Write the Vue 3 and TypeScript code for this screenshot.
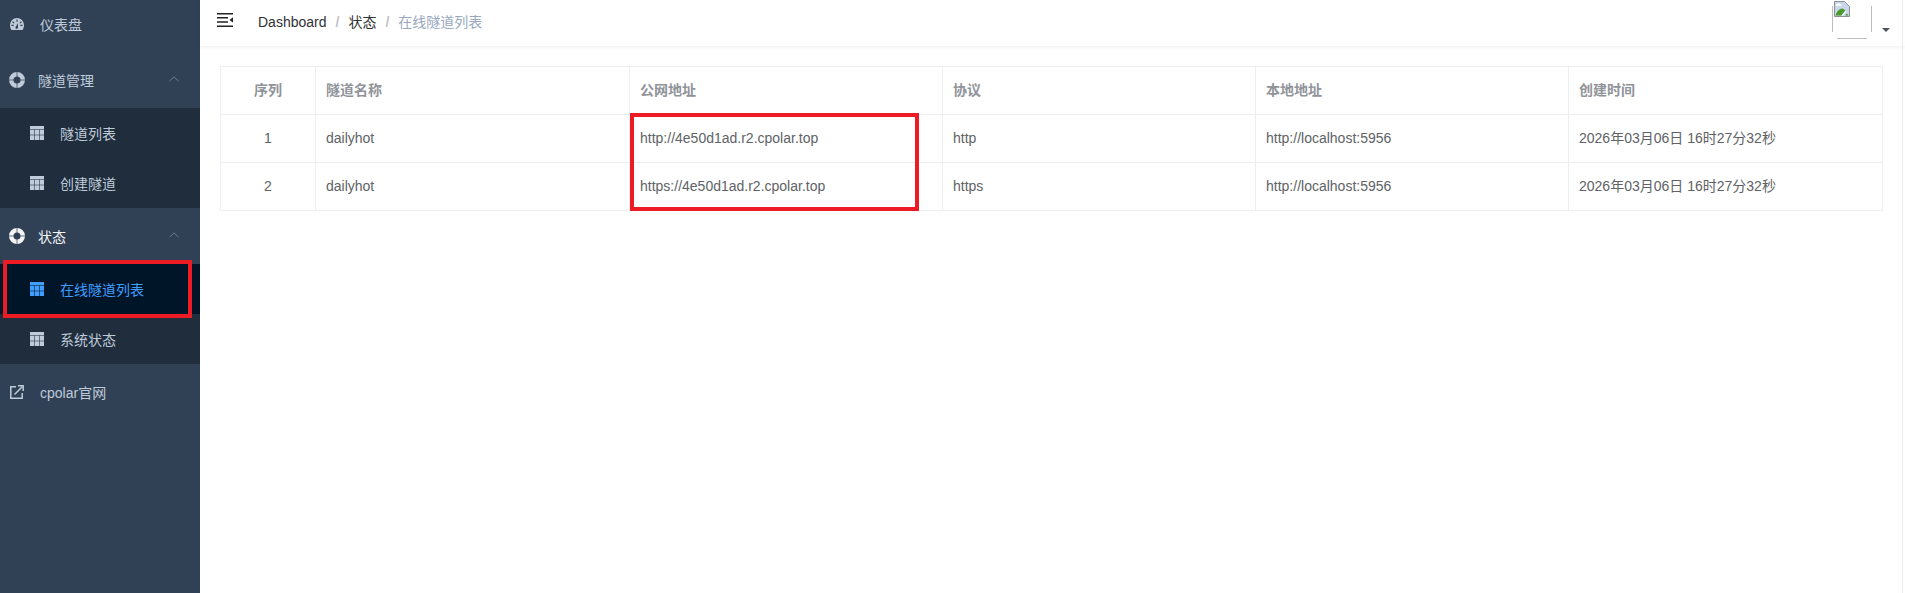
<script setup lang="ts">
interface Row { id: number; name: string; url: string; proto: string; local: string; time: string }
const rows: Row[] = [
  { id: 1, name: 'dailyhot', url: 'http://4e50d1ad.r2.cpolar.top', proto: 'http', local: 'http://localhost:5956', time: '2026年03月06日 16时27分32秒' },
  { id: 2, name: 'dailyhot', url: 'https://4e50d1ad.r2.cpolar.top', proto: 'https', local: 'http://localhost:5956', time: '2026年03月06日 16时27分32秒' },
]
const heads: string[] = ['序列', '隧道名称', '公网地址', '协议', '本地地址', '创建时间']
</script>

<template>
  <div class="app">
    <aside class="side">
      <a class="item top first">
        <svg class="ic-dash" viewBox="0 0 14 12" width="14" height="12"><path fill="#bfcbd9" fill-rule="evenodd" d="M7 0a7 7 0 0 1 7 7c0 2-.6 3.600-1.500 5H1.500C.6 10.600 0 9 0 7a7 7 0 0 1 7-7zM6.400 1.500v2.300h1.200V1.500zM3 3.200l-.9.8 1.600 1.600.9-.8zm8 0L9.400 4.800l.9.800L11.900 4zM1.500 6.700v1.200h2.200V6.700zm8.800 0v1.200h2.200V6.700zM8 5 6.200 8.300a1.300 1.300 0 1 0 1.800.9z"/></svg>
        <span>仪表盘</span>
      </a>

      <div class="head">
        <svg class="ic-ring" viewBox="0 0 16 16" width="16" height="16"><path fill="#bfcbd9" fill-rule="evenodd" d="M8 0a8 8 0 1 1 0 16A8 8 0 0 1 8 0zm0 4.500a3.500 3.500 0 1 0 0 7 3.500 3.500 0 0 0 0-7z"/><rect x="0" y="7.200" width="16" height="1.600" fill="#304156" opacity=".45"/><rect x="7.200" y="0" width="1.600" height="16" fill="#304156" opacity=".45"/></svg>
        <span>隧道管理</span>
        <svg class="chev" viewBox="0 0 10 6" width="10" height="6"><path d="M.5 5.200 5 .8l4.500 4.400" fill="none" stroke="#6f7d8e" stroke-width="1"/></svg>
      </div>
      <div class="sub">
        <a class="item nested">
          <svg class="ic-table" viewBox="0 0 14 14" width="14" height="14"><rect width="14" height="14" fill="currentColor"/><path d="M0 3.500h14M0 9h14M4.500 3.500V14M9.500 3.500V14" fill="none" stroke="#1f2d3d" stroke-opacity=".55" stroke-width="1"/></svg>
          <span>隧道列表</span>
        </a>
        <a class="item nested">
          <svg class="ic-table" viewBox="0 0 14 14" width="14" height="14"><rect width="14" height="14" fill="currentColor"/><path d="M0 3.500h14M0 9h14M4.500 3.500V14M9.500 3.500V14" fill="none" stroke="#1f2d3d" stroke-opacity=".55" stroke-width="1"/></svg>
          <span>创建隧道</span>
        </a>
      </div>

      <div class="head current">
        <svg class="ic-ring" viewBox="0 0 16 16" width="16" height="16"><path fill="#f4f4f5" fill-rule="evenodd" d="M8 0a8 8 0 1 1 0 16A8 8 0 0 1 8 0zm0 4.500a3.500 3.500 0 1 0 0 7 3.500 3.500 0 0 0 0-7z"/><rect x="0" y="7.200" width="16" height="1.600" fill="#304156" opacity=".45"/><rect x="7.200" y="0" width="1.600" height="16" fill="#304156" opacity=".45"/></svg>
        <span>状态</span>
        <svg class="chev" viewBox="0 0 10 6" width="10" height="6"><path d="M.5 5.200 5 .8l4.500 4.400" fill="none" stroke="#6f7d8e" stroke-width="1"/></svg>
      </div>
      <div class="sub">
        <a class="item nested active">
          <svg class="ic-table" viewBox="0 0 14 14" width="14" height="14"><rect width="14" height="14" fill="currentColor"/><path d="M0 3.500h14M0 9h14M4.500 3.500V14M9.500 3.500V14" fill="none" stroke="#001528" stroke-opacity=".55" stroke-width="1"/></svg>
          <span>在线隧道列表</span>
        </a>
        <a class="item nested">
          <svg class="ic-table" viewBox="0 0 14 14" width="14" height="14"><rect width="14" height="14" fill="currentColor"/><path d="M0 3.500h14M0 9h14M4.500 3.500V14M9.500 3.500V14" fill="none" stroke="#1f2d3d" stroke-opacity=".55" stroke-width="1"/></svg>
          <span>系统状态</span>
        </a>
      </div>

      <a class="item top link">
        <svg class="ic-ext" viewBox="0 0 14 14" width="14" height="14"><path d="M6 1.700H.8v11.500h11.400V8" fill="none" stroke="#bfcbd9" stroke-width="1.500"/><path d="M4.500 9.500 12 2M8 .8h5.200V6" fill="none" stroke="#bfcbd9" stroke-width="1.500"/></svg>
        <span>cpolar官网</span>
      </a>
      <div class="mark mark-side"></div>
    </aside>

    <main class="main">
      <header class="nav">
        <svg class="burger" viewBox="0 0 16 14" width="16" height="14"><path fill="#222" d="M0 0h16v1.500H0zM0 4h11v1.500H0zM0 8.300h11v1.500H0zM0 12.500h16V14H0zM16 4.200v5.400L12.500 6.900z"/></svg>
        <nav class="crumb">
          <span class="c-link">Dashboard</span><span class="sep">/</span>
          <span class="c-link">状态</span><span class="sep">/</span>
          <span class="c-now">在线隧道列表</span>
        </nav>
        <div class="user">
          <div class="avatar">
            <svg viewBox="0 0 16 16" width="16" height="16"><path fill="#c9d7ea" stroke="#8c8f94" stroke-width="1" d="M.5.500h10l5 5v10H.5z"/><path fill="#fff" d="M2 4c1-2 3-2 4-1 2 0 2 2 1 2H2z"/><path fill="#4a9a2d" d="M1.500 14.500c1-4 4-7 7-7l3 2-4 5z"/><path fill="#fff" d="m7.500 14.500 4-5 1 1-3 4z"/><path fill="#4a9a2d" d="m11 14.500 2-2 1.500 2z"/></svg>
          </div>
          <span class="caret"></span>
        </div>
      </header>

      <div class="content">
        <table class="tbl">
          <colgroup>
            <col class="c0" /><col class="w314" /><col class="w313" /><col class="w313" /><col class="w313" /><col class="w314" />
          </colgroup>
          <thead>
            <tr>
              <th v-for="(h, i) in heads" :key="h" :class="{ ctr: i === 0 }">{{ h }}</th>
            </tr>
          </thead>
          <tbody>
            <tr v-for="r in rows" :key="r.id">
              <td class="ctr">{{ r.id }}</td>
              <td>{{ r.name }}</td>
              <td>{{ r.url }}</td>
              <td>{{ r.proto }}</td>
              <td>{{ r.local }}</td>
              <td>{{ r.time }}</td>
            </tr>
          </tbody>
        </table>
        <div class="mark mark-table"></div>
      </div>
      <div class="edge"></div>
    </main>
  </div>
</template>

<style>
html, body { margin: 0; background: #fff; }
</style>

<style scoped>
.app {
  display: flex;
  height: 593px;
  overflow: hidden;
  font-family: "Liberation Sans", "Noto Sans CJK SC", sans-serif;
  font-size: 14px;
}
.side {
  position: relative;
  flex: 0 0 200px;
  background: #304156;
  color: #bfcbd9;
}
.item, .head {
  display: flex;
  align-items: center;
  box-sizing: border-box;
}
.top { height: 56px; padding-left: 10px; gap: 16px; }
.first { height: 52px; padding-bottom: 4px; }
.head { height: 56px; padding: 0 0 0 9px; gap: 13px; position: relative; }
.head.current { color: #f4f4f5; }
.chev { position: absolute; left: 169px; top: 24px; }
.sub { background: #1f2d3d; }
.nested { height: 50px; padding-left: 30px; gap: 16px; }
.active { background: #001528; color: #409eff; }
.ic-table, .ic-dash, .ic-ring, .ic-ext { flex: none; }
.main { position: relative; flex: 1; min-width: 0; }
.nav {
  display: flex;
  align-items: center;
  height: 46px;
  box-sizing: border-box;
  padding: 0 0 4px 17px;
  box-shadow: 0 1px 4px rgba(0, 21, 41, 0.08);
}
.burger { flex: none; margin-bottom: 2px; }
.crumb { margin-left: 25px; white-space: nowrap; }
.c-link { color: #303133; }
.c-now { color: #97a8be; }
.sep { color: #c0c4cc; margin: 0 9px; font-weight: 700; }
.user { display: flex; margin-left: auto; align-items: flex-start; height: 46px; position: relative; }
.avatar {
  width: 40px;
  height: 40px;
  margin: 1px 33px 0 0;
  box-sizing: border-box;
  padding: 2px;
  background:
    linear-gradient(#bdbdbd, #bdbdbd) 5px 0 / 30px 1px no-repeat,
    linear-gradient(#bdbdbd, #bdbdbd) 5px 39px / 30px 1px no-repeat,
    linear-gradient(#bdbdbd, #bdbdbd) 0 7px / 1px 26px no-repeat,
    linear-gradient(#bdbdbd, #bdbdbd) 39px 7px / 1px 26px no-repeat;
}
.avatar svg { display: block; }
.caret {
  position: absolute;
  right: 15px;
  top: 30px;
  border-style: solid;
  border-width: 4px 4px 0;
  border-color: #4b5560 transparent transparent;
}
.content { position: relative; padding: 20px 23px 0 20px; }
.tbl {
  width: 1662px;
  table-layout: fixed;
  border-collapse: collapse;
  color: #606266;
}
.c0 { width: 95px; }
.w314 { width: 314px; }
.w313 { width: 313px; }
th, td {
  border: 1px solid #ebeef5;
  height: 48px;
  box-sizing: border-box;
  padding: 0 10px;
  text-align: left;
  line-height: 23px;
  white-space: nowrap;
}
th { color: #909399; font-weight: 700; }
.ctr { text-align: center; }
.mark {
  position: absolute;
  box-sizing: border-box;
  border: 4px solid #ed1c24;
  pointer-events: none;
}
.mark-side { left: 3px; top: 260px; width: 189px; height: 58px; }
.mark-table { left: 430px; top: 67px; width: 289px; height: 98px; }
.edge { position: absolute; top: 0; right: 2px; bottom: 0; width: 1px; background: #ececec; }
</style>
